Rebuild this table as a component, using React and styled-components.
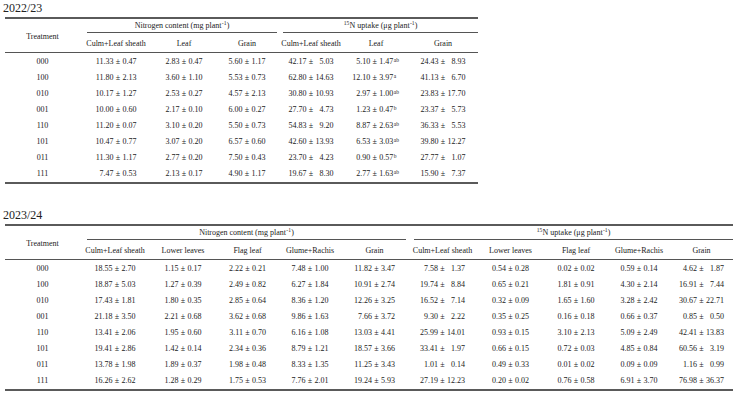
import React from 'react';
import styled, { createGlobalStyle } from 'styled-components';

const GlobalStyle = createGlobalStyle`
  html, body { margin: 0; padding: 0; background: #ffffff; }
  body {
    font-family: "Liberation Serif", "Times New Roman", serif;
    color: #222222;
  }
`;

const Page = styled.div`
  width: 738px;
  height: 401px;
  box-sizing: border-box;
  padding: 0 5px;
  overflow: hidden;
`;

const Section = styled.section`
  width: ${(p) => p.$width}px;
  margin-bottom: ${(p) => p.$gap || 0}px;
`;

const Title = styled.div`
  font-size: 12px;
  line-height: 17px;
  height: 17px;
  margin-left: -2px;
`;

const Table = styled.div`
  border-top: 2px solid #5a5a5a;
  border-bottom: 2px solid #5a5a5a;
  font-size: 8px;
`;

const Head = styled.div`
  display: grid;
  grid-template-columns: ${(p) => p.$cols};
  grid-template-rows: 14px 20px;
`;

const TreatHead = styled.div`
  grid-row: 1 / span 2;
  display: flex;
  align-items: center;
  justify-content: center;
  border-bottom: 1px solid #555;
  box-sizing: border-box;
  padding-top: 1px;
`;

const GroupHead = styled.div`
  grid-column: span ${(p) => p.$span};
  margin: 0 ${(p) => p.$mr}px 0 ${(p) => p.$ml}px;
  border-bottom: 1px solid #555;
  box-sizing: border-box;
  display: flex;
  align-items: center;
  justify-content: center;
  white-space: nowrap;
`;

const SubHead = styled.div`
  border-bottom: 1px solid #555;
  box-sizing: border-box;
  padding-top: 2px;
  display: flex;
  align-items: center;
  justify-content: center;
  white-space: nowrap;
`;

const HeadText = styled.span`
  display: inline-flex;
  align-items: flex-start;
  line-height: 9px;
`;

const HeadSup = styled.span`
  font-size: 5.5px;
  line-height: 6px;
  margin-top: -1px;
  padding: 0 0.3px;
`;

const Body = styled.div`
  padding-top: 1px;
`;

const Row = styled.div`
  display: grid;
  grid-template-columns: ${(p) => p.$cols};
  height: 16px;
  line-height: 16px;
`;

const TreatCell = styled.div`
  text-align: center;
`;

const ValueCell = styled.div`
  display: flex;
  justify-content: center;
  align-items: center;
  white-space: nowrap;
`;

const Mean = styled.span`
  display: inline-block;
  width: ${(p) => p.$w}em;
  text-align: right;
`;

const Pm = styled.span`
  padding: 0 0.3em 0 0.3em;
`;

const Sd = styled.span`
  display: inline-block;
  width: ${(p) => p.$w}em;
  text-align: right;
`;

const Sup = styled.span`
  display: inline-block;
  width: ${(p) => p.$w}px;
  align-self: flex-start;
  margin-top: 3px;
  padding-left: 0.5px;
  font-size: 5.5px;
  line-height: 6px;
  text-align: left;
`;

const nLabel = (
  <HeadText>
    Nitrogen content (mg plant<HeadSup>-1</HeadSup>)
  </HeadText>
);
const uLabel = (
  <HeadText>
    <HeadSup>15</HeadSup>N uptake (μg plant<HeadSup>-1</HeadSup>)
  </HeadText>
);

const tables = [
  {
    title: '2022/23',
    width: 473,
    gap: 23,
    cols: [75, 72, 64, 62, 66, 64, 70],
    groups: [
      { label: nLabel, span: 3, ml: 7, mr: 1 },
      { label: uLabel, span: 3, ml: 5, mr: 0 },
    ],
    subs: ['Culm+Leaf sheath', 'Leaf', 'Grain', 'Culm+Leaf sheath', 'Leaf', 'Grain'],
    rows: [
      ['000', '11.33 0.47', '2.83 0.47', '5.60 1.17', '42.17 5.03', '5.10 1.47 ab', '24.43 8.93'],
      ['100', '11.80 2.13', '3.60 1.10', '5.53 0.73', '62.80 14.63', '12.10 3.97 a', '41.13 6.70'],
      ['010', '10.17 1.27', '2.53 0.27', '4.57 2.13', '30.80 10.93', '2.97 1.00 ab', '23.83 17.70'],
      ['001', '10.00 0.60', '2.17 0.10', '6.00 0.27', '27.70 4.73', '1.23 0.47 b', '23.37 5.73'],
      ['110', '11.20 0.07', '3.10 0.20', '5.50 0.73', '54.83 9.20', '8.87 2.63 ab', '36.33 5.53'],
      ['101', '10.47 0.77', '3.07 0.20', '6.57 0.60', '42.60 13.93', '6.53 3.03 ab', '39.80 12.27'],
      ['011', '11.30 1.17', '2.77 0.20', '7.50 0.43', '23.70 4.23', '0.90 0.57 b', '27.77 1.07'],
      ['111', '7.47 0.53', '2.13 0.17', '4.90 1.17', '19.67 8.30', '2.77 1.63 ab', '15.90 7.37'],
    ],
  },
  {
    title: '2023/24',
    width: 728,
    gap: 0,
    cols: [75, 70, 66, 63, 62, 67, 69, 67, 64, 62, 63],
    groups: [
      { label: nLabel, span: 5, ml: 7, mr: 2 },
      { label: uLabel, span: 5, ml: 6, mr: 0 },
    ],
    subs: [
      'Culm+Leaf sheath', 'Lower leaves', 'Flag leaf', 'Glume+Rachis', 'Grain',
      'Culm+Leaf sheath', 'Lower leaves', 'Flag leaf', 'Glume+Rachis', 'Grain',
    ],
    rows: [
      ['000', '18.55 2.70', '1.15 0.17', '2.22 0.21', '7.48 1.00', '11.82 3.47', '7.58 1.37', '0.54 0.28', '0.02 0.02', '0.59 0.14', '4.62 1.87'],
      ['100', '18.87 5.03', '1.27 0.39', '2.49 0.82', '6.27 1.84', '10.91 2.74', '19.74 8.84', '0.65 0.21', '1.81 0.91', '4.30 2.14', '16.91 7.44'],
      ['010', '17.43 1.81', '1.80 0.35', '2.85 0.64', '8.36 1.20', '12.26 3.25', '16.52 7.14', '0.32 0.09', '1.65 1.60', '3.28 2.42', '30.67 22.71'],
      ['001', '21.18 3.50', '2.21 0.68', '3.62 0.68', '9.86 1.63', '7.66 3.72', '9.30 2.22', '0.35 0.25', '0.16 0.18', '0.66 0.37', '0.85 0.50'],
      ['110', '13.41 2.06', '1.95 0.60', '3.11 0.70', '6.16 1.08', '13.03 4.41', '25.99 14.01', '0.93 0.15', '3.10 2.13', '5.09 2.49', '42.41 13.83'],
      ['101', '19.41 2.86', '1.42 0.14', '2.34 0.36', '8.79 1.21', '18.57 3.66', '33.41 1.97', '0.66 0.15', '0.72 0.03', '4.85 0.84', '60.56 3.19'],
      ['011', '13.78 1.98', '1.89 0.37', '1.98 0.48', '8.33 1.35', '11.25 3.43', '1.01 0.14', '0.49 0.33', '0.01 0.02', '0.09 0.09', '1.16 0.99'],
      ['111', '16.26 2.62', '1.28 0.29', '1.75 0.53', '7.76 2.01', '19.24 5.93', '27.19 12.23', '0.20 0.02', '0.76 0.58', '6.91 3.70', '76.98 36.37'],
    ],
  },
];

const numWidth = (s) => (s.length - 1) * 0.5 + 0.25;

function columnSpecs(rows, nCols) {
  const specs = [];
  for (let c = 1; c < nCols; c++) {
    let mw = 0;
    let sw = 0;
    let hasSup = false;
    rows.forEach((r) => {
      const [m, s, sup] = r[c].split(' ');
      mw = Math.max(mw, numWidth(m));
      sw = Math.max(sw, numWidth(s));
      if (sup) hasSup = true;
    });
    specs.push({ mw, sw, supW: hasSup ? 6 : 0 });
  }
  return specs;
}

function DataTable({ t }) {
  const cols = t.cols.map((w) => `${w}px`).join(' ');
  const specs = columnSpecs(t.rows, t.cols.length);
  return (
    <Section $width={t.width} $gap={t.gap}>
      <Title>{t.title}</Title>
      <Table>
        <Head $cols={cols}>
          <TreatHead>Treatment</TreatHead>
          {t.groups.map((g, i) => (
            <GroupHead key={i} $span={g.span} $ml={g.ml} $mr={g.mr}>
              {g.label}
            </GroupHead>
          ))}
          {t.subs.map((s, i) => (
            <SubHead key={i}>{s}</SubHead>
          ))}
        </Head>
        <Body>
          {t.rows.map((r) => (
            <Row key={r[0]} $cols={cols}>
              <TreatCell>{r[0]}</TreatCell>
              {r.slice(1).map((v, i) => {
                const [m, s, sup] = v.split(' ');
                const sp = specs[i];
                return (
                  <ValueCell key={i}>
                    <Mean $w={sp.mw}>{m}</Mean>
                    <Pm>±</Pm>
                    <Sd $w={sp.sw}>{s}</Sd>
                    {sp.supW > 0 && <Sup $w={sp.supW}>{sup}</Sup>}
                  </ValueCell>
                );
              })}
            </Row>
          ))}
        </Body>
      </Table>
    </Section>
  );
}

export default function App() {
  return (
    <>
      <GlobalStyle />
      <Page>
        {tables.map((t) => (
          <DataTable key={t.title} t={t} />
        ))}
      </Page>
    </>
  );
}
